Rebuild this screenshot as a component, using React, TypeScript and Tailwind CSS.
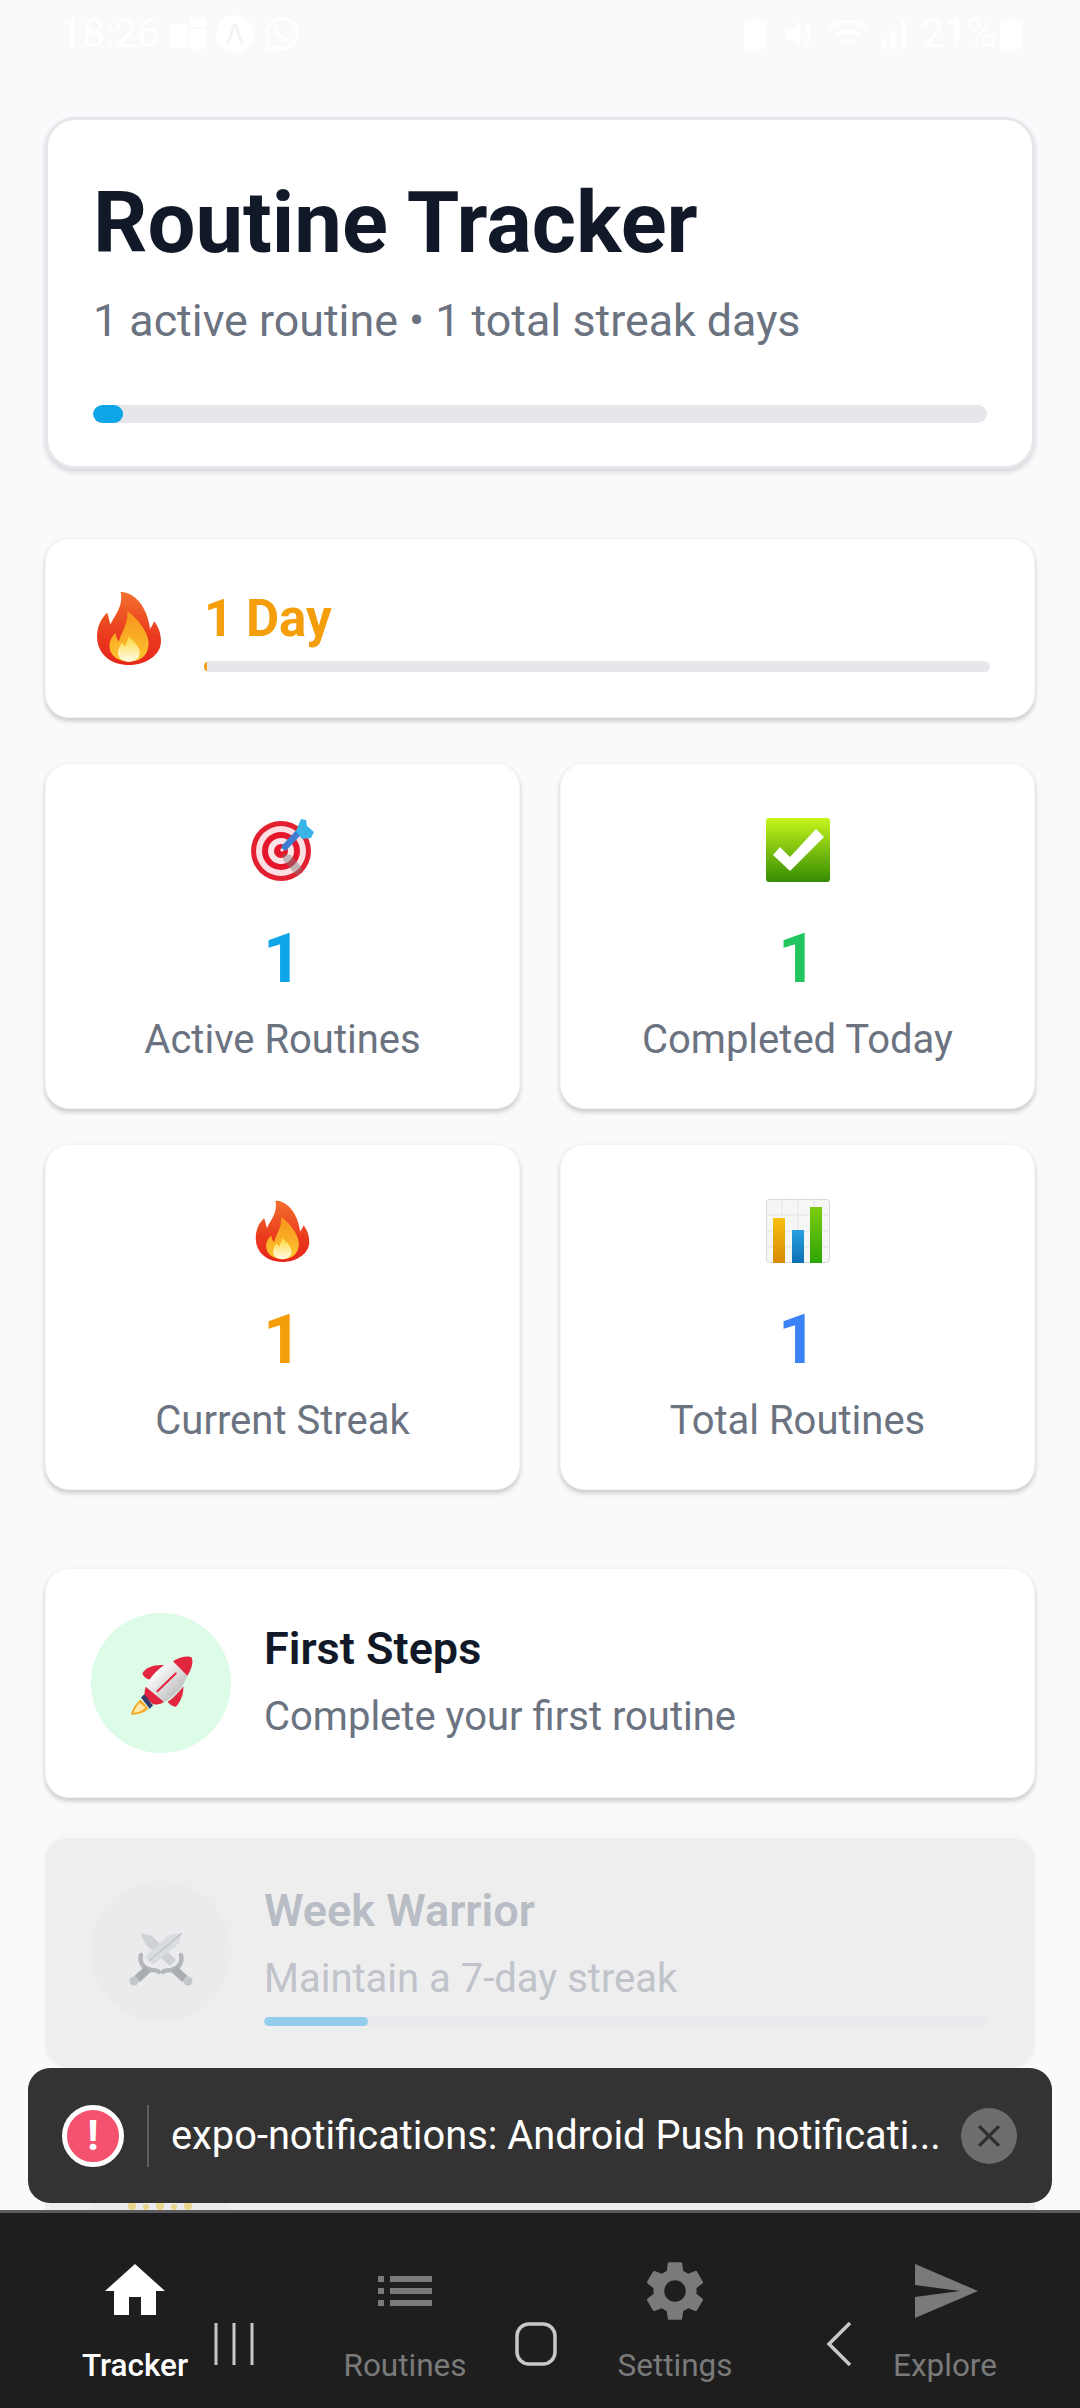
import { FC, ReactNode } from 'react';
import { MdHome, MdList, MdSettings, MdSend, MdClose } from 'react-icons/md';

const FONT = "font-['Roboto','Noto_Sans',sans-serif]";

const FireIcon: FC<{ className?: string; id: string }> = ({ className, id }) => (
  <svg viewBox="55 45 190 220" className={className}>
    <defs>
      <linearGradient id={`${id}Outer`} x1="0" y1="0" x2="0" y2="1">
        <stop offset="0" stopColor="#f3702c" />
        <stop offset="0.6" stopColor="#ea3a1e" />
        <stop offset="1" stopColor="#e8261c" />
      </linearGradient>
      <linearGradient id={`${id}Mid`} x1="0" y1="0" x2="0" y2="1">
        <stop offset="0" stopColor="#f7941d" />
        <stop offset="1" stopColor="#fdc52e" />
      </linearGradient>
      <linearGradient id={`${id}Core`} x1="0" y1="0" x2="0" y2="1">
        <stop offset="0" stopColor="#fdd83c" />
        <stop offset="1" stopColor="#fffde8" />
      </linearGradient>
    </defs>
    <path d="M125 48c25-3 60 22 75 62 8 20 12 40 12 48 6-8 10-16 13-23 15 20 20 40 20 60 0 40-45 70-95 70s-95-30-95-85c0-30 13-55 30-70 5 15 7 25 10 35 10-25 40-55 30-97z" fill={`url(#${id}Outer)`} />
    <path d="M145 105c30 20 60 60 63 90 2 40-23 60-58 60s-60-20-58-50c1-15 8-25 18-35 2 12 5 20 10 25 5-25 30-55 25-90z" fill={`url(#${id}Mid)`} />
    <path d="M148 180c17 15 34 30 34 48 0 17-14 27-32 27-20 0-33-10-33-27 0-13 8-23 13-30 3 7 5 10 8 12 4-10 10-20 10-30z" fill={`url(#${id}Core)`} />
  </svg>
);

const TargetIcon: FC<{ className?: string }> = ({ className }) => (
  <svg viewBox="0 0 64 64" className={className}>
    <circle cx="30" cy="33" r="30" fill="#e2202f" />
    <circle cx="30" cy="33" r="25" fill="#fbdfe3" />
    <circle cx="30" cy="33" r="19" fill="#e5162b" />
    <circle cx="30" cy="33" r="13" fill="#fbe4e7" />
    <circle cx="30" cy="33" r="7" fill="#e5162b" />
    <path d="M32 36l8 1 12 14-6 7-14-16z" fill="#7f7f7f" opacity="0.45" />
    <path d="M30 33l5-5" stroke="#ececec" strokeWidth="3" />
    <path d="M34 29l15-16" stroke="#3d7cd2" strokeWidth="6.5" strokeLinecap="round" />
    <path d="M45 13l5-12 5 1 1 6 7 6-3 6-9 1z" fill="#38b4e6" />
  </svg>
);

const CheckIcon: FC<{ className?: string }> = ({ className }) => (
  <svg viewBox="0 0 64 64" className={className}>
    <defs>
      <linearGradient id="checkBg" x1="0" y1="0" x2="0" y2="1">
        <stop offset="0" stopColor="#c6f51c" />
        <stop offset="1" stopColor="#348c02" />
      </linearGradient>
    </defs>
    <rect width="64" height="64" rx="3" fill="url(#checkBg)" />
    <path d="M7 37l7-8 10 10 26-28 8 8-34 34z" fill="#fff" />
  </svg>
);

const ChartIcon: FC<{ className?: string }> = ({ className }) => (
  <svg viewBox="0 0 64 64" className={className}>
    <defs>
      <linearGradient id="barA" x1="0" y1="0" x2="0" y2="1">
        <stop offset="0" stopColor="#f8bf10" />
        <stop offset="1" stopColor="#d88a08" />
      </linearGradient>
      <linearGradient id="barB" x1="0" y1="0" x2="0" y2="1">
        <stop offset="0" stopColor="#2aa0e0" />
        <stop offset="1" stopColor="#0d6fb4" />
      </linearGradient>
      <linearGradient id="barC" x1="0" y1="0" x2="0" y2="1">
        <stop offset="0" stopColor="#7ccb0c" />
        <stop offset="1" stopColor="#2da606" />
      </linearGradient>
    </defs>
    <rect x="0.5" y="0.5" width="63" height="63" rx="3" fill="#f5f6f6" stroke="#d6d8d8" />
    <path d="M0 16h64M0 32h64M0 48h64M16 0v64M32 0v64M48 0v64" stroke="#e3e5e5" strokeWidth="1" />
    <rect x="7" y="19" width="12" height="45" fill="url(#barA)" />
    <rect x="26" y="31" width="12" height="33" fill="url(#barB)" />
    <rect x="44" y="8" width="12" height="56" fill="url(#barC)" />
  </svg>
);

const RocketIcon: FC<{ className?: string }> = ({ className }) => (
  <svg viewBox="200 225 195 185" className={className}>
    <defs>
      <linearGradient id="hull" x1="0" y1="0" x2="1" y2="1">
        <stop offset="0.2" stopColor="#ffffff" />
        <stop offset="1" stopColor="#a9a9a9" />
      </linearGradient>
    </defs>
    <path d="M235 358c-15 12-27 32-29 45 14 2 39-3 52-18z" fill="#f5a623" />
    <path d="M232 368c-10 10-17 22-18 30 11 0 26-6 36-15z" fill="#ffe9a8" />
    <path d="M305 255c-30-2-55 7-65 25 5 12 15 18 25 18 10-18 25-33 40-43z" fill="#e2263f" />
    <path d="M363 318c2 27-13 54-23 62-12-2-20-10-24-15 19-13 34-30 47-47z" fill="#e2263f" />
    <path d="M250 320c-5 20-5 30 0 32l22 20c13 3 25 0 33-7z" fill="#e2263f" />
    <path d="M335 243l40 42c-10 35-45 70-70 80l-52-47c7-28 42-63 82-75z" fill="url(#hull)" />
    <path d="M285 333l55-53" stroke="#e2263f" strokeWidth="6" strokeLinecap="round" />
    <path d="M332 243c18-11 43-18 56-11 7 18-3 38-13 55z" fill="#e2263f" />
    <path d="M236 352l10-10 26 34-10 10z" fill="#343a6b" />
  </svg>
);

const SwordsIcon: FC<{ className?: string }> = ({ className }) => (
  <svg viewBox="0 0 70 60" className={className}>
    <path d="M14 6l12 3 24 24-6 6-24-21z" fill="#cfd2d4" />
    <path d="M56 6l-13 2-24 22 8 8 26-22z" fill="#d9dcde" />
    <path d="M56 6L23 34" stroke="#bfc3c5" strokeWidth="1.2" />
    <g fill="none" stroke="#b3b7ba" strokeWidth="4.5" strokeLinecap="round">
      <path d="M15 28c-2 8 3 14 10 15 3 0 6 0 8 2" />
      <path d="M55 28c2 8-3 14-10 15-3 0-6 0-8 2" />
    </g>
    <g stroke="#a9adb0" strokeWidth="8">
      <path d="M22 42L11 52" />
      <path d="M48 42l11 10" />
    </g>
    <circle cx="8" cy="54" r="4.5" fill="#c4c7c9" />
    <circle cx="62" cy="54" r="4.5" fill="#c4c7c9" />
  </svg>
);

const CrownIcon: FC<{ className?: string }> = ({ className }) => (
  <svg viewBox="0 0 66 56" className={className}>
    <g fill="#e9d68c">
      <circle cx="5" cy="11" r="4" />
      <circle cx="19" cy="12" r="3" />
      <circle cx="33" cy="11" r="4" />
      <circle cx="47" cy="12" r="3" />
      <circle cx="61" cy="11" r="4" />
      <path d="M5 16l11 16 6-16 11 18 11-18 6 16 11-16-5 38H10z" />
    </g>
  </svg>
);

const Progress: FC<{ h: string; fill: string; bar: string; track?: string }> = ({ h, fill, bar, track = 'bg-[#e5e7eb]' }) => (
  <div className={`${h} ${track} w-full rounded-full overflow-hidden`}>
    <div className={`h-full ${fill} ${bar} rounded-full`} />
  </div>
);

const STATS = [
  { icon: <TargetIcon className="w-[64px] h-[64px]" />, value: 'text-[#0ea5e9]', label: 'Active Routines' },
  { icon: <CheckIcon className="w-[64px] h-[64px]" />, value: 'text-[#22c55e]', label: 'Completed Today' },
  { icon: <FireIcon id="fireSmall" className="w-[55px] h-[62px]" />, value: 'text-[#f59e0b]', label: 'Current Streak' },
  { icon: <ChartIcon className="w-[64px] h-[64px]" />, value: 'text-[#3b82f6]', label: 'Total Routines' },
];

const CARD = 'bg-white rounded-[24px] border border-[#f3f4f6] shadow-[0_3px_5px_rgba(0,0,0,0.2)]';

const StatusBar = () => (
  <div className="h-[72px] shrink-0 pl-[60px] pr-[58px] flex items-start justify-between text-white">
    <div className="flex items-center gap-[10px] h-[70px] pb-[2px]">
      <span className="text-[40px] leading-none">18:26</span>
      <svg viewBox="0 0 36 30" className="w-[36px] h-[30px]" fill="#fff">
        <path d="M0 5h17v24H0zM20 0h16v8H20zM20 10h16v20H20z" />
      </svg>
      <svg viewBox="0 0 40 40" className="w-[38px] h-[38px]">
        <circle cx="20" cy="20" r="20" fill="#fff" />
        <path d="M20 9l-8 22M20 9l8 22" stroke="#f1f3f5" strokeWidth="3" />
      </svg>
      <svg viewBox="0 0 36 36" className="w-[36px] h-[36px]" fill="none" stroke="#fff" strokeWidth="3">
        <path d="M3 33l2-8a15 15 0 1 1 6 6z" />
        <path d="M12 11c0 7 5 12 12 13" />
      </svg>
    </div>
    <div className="flex items-center gap-[12px] h-[70px] pb-[2px]">
      <svg viewBox="0 0 22 30" className="w-[22px] h-[30px]" fill="#fff">
        <path d="M7 0h8v3h7v27H0V3h7z" />
      </svg>
      <svg viewBox="0 0 30 30" className="w-[30px] h-[30px] ml-[6px]" fill="#fff">
        <path d="M2 10h6l8-8v26l-8-8H2zM21 6l2-2c5 6 5 16 0 22l-2-2c4-5 4-13 0-18z" />
      </svg>
      <svg viewBox="0 0 44 34" className="w-[44px] h-[34px]" fill="none" stroke="#fff" strokeWidth="3">
        <path d="M2 12c11-10 29-10 40 0M9 19c7-6 19-6 26 0M16 26c3-3 9-3 12 0" />
      </svg>
      <svg viewBox="0 0 24 30" className="w-[24px] h-[30px]" fill="#fff">
        <path d="M0 20h4v10H0zM9 12h4v18H9zM19 0h4v30h-4z" />
      </svg>
      <span className="text-[40px] leading-none ml-[4px] -mr-[8px]">21%</span>
      <svg viewBox="0 0 22 30" className="w-[22px] h-[30px]" fill="#fff">
        <path d="M7 0h8v3h7v27H0V3h7z" />
      </svg>
    </div>
  </div>
);

const TabItem: FC<{ icon: ReactNode; label: string; active?: boolean }> = ({ icon, label, active }) => (
  <div className={`flex-1 flex flex-col items-center ${active ? 'text-white' : 'text-[#7a7a7a]'}`}>
    <div className="h-[72px] flex items-center justify-center">{icon}</div>
    <span className={`text-[31.5px] leading-[40px] mt-[19px] ${active ? 'font-medium' : 'font-normal'}`}>{label}</span>
  </div>
);

export default function App() {
  return (
    <div className={`relative w-[1080px] h-[2408px] overflow-hidden bg-[#f9fafb] flex flex-col ${FONT}`}>
      <StatusBar />

      <main className="flex-1 min-h-0 overflow-hidden px-[45px] pt-[45px]">
        <section className="bg-white rounded-[30px] border-[3px] border-[#e5e7eb] shadow-[0_3px_5px_rgba(0,0,0,0.15)] h-[352px] px-[45px] pt-[41px]">
          <h1 className="text-[85px] leading-[124px] font-bold text-[#111827]">Routine Tracker</h1>
          <p className="text-[44.8px] leading-[64px] text-[#6b7280] mt-[4px]">1 active routine • 1 total streak days</p>
          <div className="mt-[52px]">
            <Progress h="h-[18px]" bar="w-[30px]" fill="bg-[#0ea5e9]" />
          </div>
        </section>

        <section className={`${CARD} h-[180px] mt-[69px] pl-[50px] pr-[44px] flex items-center gap-[42px]`}>
          <FireIcon id="fireBig" className="w-[66px] h-[74px] shrink-0" />
          <div className="flex-1 mt-[4px]">
            <p className="text-[51px] leading-[60px] font-bold text-[#f59e0b]">1 Day</p>
            <div className="mt-[12px]">
              <Progress h="h-[11px]" bar="w-[3px]" fill="bg-[#f59e0b]" />
            </div>
          </div>
        </section>

        <section className="grid grid-cols-2 gap-x-[40px] gap-y-[35px] mt-[45px]">
          {STATS.map((s) => (
            <div key={s.label} className={`${CARD} h-[346px] flex flex-col items-center pt-[54px]`}>
              <div className="h-[64px] flex items-center justify-center">{s.icon}</div>
              <p className={`text-[68px] leading-[80px] font-bold mt-[37px] ${s.value}`}>1</p>
              <p className="text-[40px] leading-[50px] text-[#6b7280] mt-[16px]">{s.label}</p>
            </div>
          ))}
        </section>

        <section className={`${CARD} h-[230px] mt-[78px] px-[45px] flex items-center gap-[33px]`}>
          <div className="w-[140px] h-[140px] rounded-full bg-[#dcfce7] flex items-center justify-center shrink-0">
            <RocketIcon className="w-[65px] h-[62px] mt-[6px]" />
          </div>
          <div className="flex-1 -mt-[3px]">
            <p className="text-[45px] leading-[52px] font-semibold text-[#111827]">First Steps</p>
            <p className="text-[40px] leading-[48px] text-[#6b7280] mt-[18px]">Complete your first routine</p>
          </div>
        </section>

        <section className="bg-[#eeeeef] rounded-[24px] border-t-[5px] border-x border-[#f5f6f7] shadow-[0_2px_4px_rgba(0,0,0,0.06)] h-[233px] mt-[35px] px-[45px] flex items-center gap-[33px]">
          <div className="w-[140px] h-[140px] rounded-full bg-[#ebebed] flex items-center justify-center shrink-0 -mt-[3px]">
            <SwordsIcon className="w-[70px] h-[60px] mt-[12px]" />
          </div>
          <div className="flex-1 mt-[6px]">
            <p className="text-[45px] leading-[52px] font-semibold text-[#b8bcc4]">Week Warrior</p>
            <p className="text-[40px] leading-[48px] text-[#c0c3ca] mt-[18px]">Maintain a 7-day streak</p>
            <div className="mt-[14px]">
              <Progress h="h-[9px]" bar="w-[104px]" fill="bg-[#93cdec]" track="bg-[#e9e9ee]" />
            </div>
          </div>
        </section>

        <section className="bg-[#eeeeef] rounded-[24px] h-[233px] mt-[35px] px-[45px] flex items-center">
          <div className="w-[140px] h-[140px] rounded-full bg-[#ebebed] flex items-center justify-center shrink-0">
            <CrownIcon className="w-[66px] h-[56px] mt-[10px]" />
          </div>
        </section>
      </main>

      <nav className="h-[198px] shrink-0 bg-[#1e1e1e] border-t-[3px] border-[#5c5c5c] flex pt-[42px]">
        <TabItem active label="Tracker" icon={<MdHome size={72} />} />
        <TabItem label="Routines" icon={<MdList size={72} />} />
        <TabItem label="Settings" icon={<MdSettings size={72} />} />
        <TabItem label="Explore" icon={<MdSend size={72} />} />
      </nav>

      {/* toast sits over the list */}
      <div className="absolute left-[28px] top-[2068px] w-[1024px] h-[135px] rounded-[22px] bg-[#333333] flex items-center pl-[34px] pr-[34px]">
        <div className="w-[62px] h-[62px] rounded-full border-[5px] border-white bg-[#f4526f] flex items-center justify-center shrink-0 text-white text-[42px] font-bold leading-none">!</div>
        <div className="w-[2px] h-[62px] bg-[#5f5f5f] ml-[23px] mr-[22px] shrink-0" />
        <p className="flex-1 min-w-0 text-[39.8px] leading-[46px] text-white whitespace-nowrap">expo-notifications: Android Push notificati...</p>
        <div className="w-[56px] h-[56px] rounded-full bg-[#6d6d6d] flex items-center justify-center shrink-0 text-[#2e2e2e] -translate-x-[1px]">
          <MdClose size={38} />
        </div>
      </div>

      {/* Android system buttons drawn on top of the tab bar */}
      <svg viewBox="0 0 40 44" className="absolute left-[214px] top-[2322px] w-[40px] h-[44px]" fill="none" stroke="#c8c8c8" strokeWidth="3">
        <path d="M2 1v42M20 1v42M38 1v42" />
      </svg>
      <svg viewBox="0 0 42 44" className="absolute left-[515px] top-[2322px] w-[42px] h-[44px]" fill="none" stroke="#c8c8c8" strokeWidth="3.5">
        <rect x="2" y="2" width="38" height="40" rx="12" />
      </svg>
      <svg viewBox="0 0 26 44" className="absolute left-[826px] top-[2322px] w-[26px] h-[44px]" fill="none" stroke="#c8c8c8" strokeWidth="3.5">
        <path d="M24 1L3 22l21 21" />
      </svg>
    </div>
  );
}
